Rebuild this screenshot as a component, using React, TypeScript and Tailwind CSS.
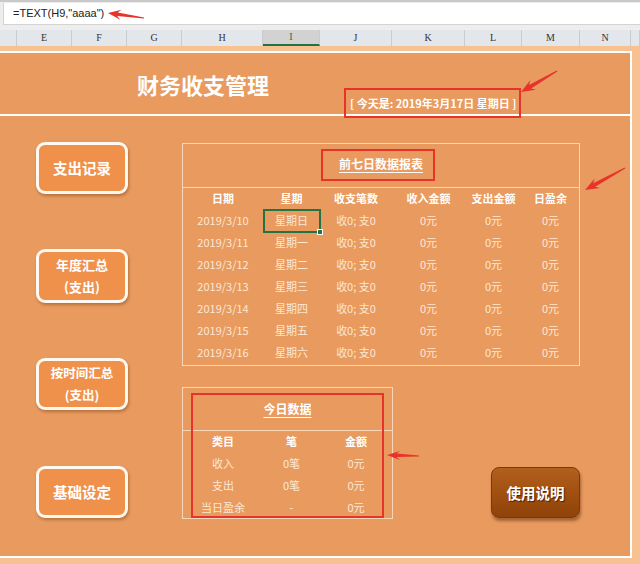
import React from "react";

type P = [number, number];

function arrowPts(tip: P, tail: P, head = 13, hw = 5.5, sw = 2, tw = 0.7): string {
  const dx = tail[0] - tip[0];
  const dy = tail[1] - tip[1];
  const L = Math.hypot(dx, dy);
  const ux = dx / L;
  const uy = dy / L;
  const nx = -uy;
  const ny = ux;
  const bx = tip[0] + ux * head;
  const by = tip[1] + uy * head;
  const cx = tip[0] + ux * (head - 3.5);
  const cy = tip[1] + uy * (head - 3.5);
  const pts: P[] = [
    tip,
    [bx + nx * hw, by + ny * hw],
    [cx + nx * sw, cy + ny * sw],
    [tail[0] + nx * tw, tail[1] + ny * tw],
    [tail[0] - nx * tw, tail[1] - ny * tw],
    [cx - nx * sw, cy - ny * sw],
    [bx - nx * hw, by - ny * hw],
  ];
  return pts.map((p) => `${p[0].toFixed(1)},${p[1].toFixed(1)}`).join(" ");
}

const headerCols = [
  { l: "", c: "w-[17px]" },
  { l: "E", c: "w-[55px]" },
  { l: "F", c: "w-[55px]" },
  { l: "G", c: "w-[55px]" },
  { l: "H", c: "w-[81px]" },
  { l: "I", c: "w-[57px] bg-[#D2D2D2] border-b-2 border-b-[#217346] text-[#217346]" },
  { l: "J", c: "w-[72px]" },
  { l: "K", c: "w-[73px]" },
  { l: "L", c: "w-[57px]" },
  { l: "M", c: "w-[58px]" },
  { l: "N", c: "w-[51px]" },
  { l: "", c: "w-[9px]" },
];

const weekRows = [
  ["2019/3/10", "星期日"],
  ["2019/3/11", "星期一"],
  ["2019/3/12", "星期二"],
  ["2019/3/13", "星期三"],
  ["2019/3/14", "星期四"],
  ["2019/3/15", "星期五"],
  ["2019/3/16", "星期六"],
];

const todayRows = [
  ["收入", "0笔", "0元"],
  ["支出", "0笔", "0元"],
  ["当日盈余", "-", "0元"],
];

function SideButton({ children, className }: { children: React.ReactNode; className: string }) {
  return (
    <div
      className={
        "w-[92px] h-[52px] rounded-[9px] border-[3px] border-[#FFF9F2] bg-[#F0914B] shadow-[1px_2px_3px_rgba(90,40,0,0.35)] flex flex-col items-center justify-center text-white font-bold " +
        className
      }
    >
      {children}
    </div>
  );
}

export default function App() {
  return (
    <div className="relative w-[640px] h-[564px] overflow-hidden bg-[#F7C192] font-['Noto_Sans_CJK_SC',sans-serif]">
      {/* formula bar */}
      <div className="h-[30px] bg-[#EDEDED] border-t-2 border-[#C9C9C9] pt-[1px]">
        <div className="ml-[3px] h-[22px] bg-white border-l border-b border-[#D4D4D4] flex items-center pl-[9px] font-['Liberation_Sans',sans-serif] text-[11px] text-[#222]">
          =TEXT(H9,"aaaa")
        </div>
      </div>

      {/* column header row */}
      <div className="h-[16px] flex bg-[#E3E6EA]">
        {headerCols.map((c, i) => (
          <div
            key={i}
            className={
              "h-full shrink-0 border-r border-[#C8CBCF] flex items-center justify-center font-['Liberation_Serif',serif] text-[10px] leading-none text-[#333] " +
              c.c
            }
          >
            {c.l}
          </div>
        ))}
      </div>

      <div className="h-[5px]" />

      {/* main panel */}
      <div className="w-[632px] h-[507px] bg-[#E89A5F] border-t-2 border-r-2 border-b-2 border-white flex flex-col">
        {/* title row */}
        <div className="h-[63px] shrink-0 border-b-2 border-white flex">
          <div className="w-[350px] pl-[137px] flex items-center">
            <span className="text-[22px] font-bold text-white leading-none">财务收支管理</span>
          </div>
          <div className="self-end pb-[1px]">
            <span className="relative inline-block text-[11px] font-bold text-white leading-[16px] whitespace-nowrap">
              [ 今天是: 2019年3月17日 星期日 ]
              <span className="absolute left-[-6px] right-[-5px] top-[-7px] bottom-[-7px] border-2 border-[#E8332B]" />
            </span>
          </div>
        </div>

        {/* body */}
        <div className="flex-1 flex">
          {/* left buttons */}
          <div className="w-[182px] shrink-0 pl-[36px] flex flex-col">
            <SideButton className="mt-[26px] text-[14.5px]">支出记录</SideButton>
            <SideButton className="mt-[55px] text-[13px] leading-[22px] h-[54px]">
              <span>年度汇总</span>
              <span>(支出)</span>
            </SideButton>
            <SideButton className="mt-[55px] text-[12.5px] leading-[22px]">
              <span>按时间汇总</span>
              <span>(支出)</span>
            </SideButton>
            <SideButton className="mt-[56px] text-[14.5px]">基础设定</SideButton>
          </div>

          {/* right area */}
          <div className="flex flex-col pt-[27px]">
            {/* table 1 */}
            <div className="w-[398px] border border-[#F8D7B8] pb-[2px]">
              <div className="h-[44px] border-b border-[#F8D7B8] flex items-center justify-center pb-[3px]">
                <span className="relative text-[12px] font-bold text-white underline underline-offset-[3px] leading-[16px]">
                  前七日数据报表
                  <span className="absolute left-[-18px] right-[-12px] top-[-7px] bottom-[-9px] border-2 border-[#E8332B]" />
                </span>
              </div>
              <div className="grid grid-cols-[80px_57px_72px_73px_57px_57px] text-[11px] text-center">
                {["日期", "星期", "收支笔数", "收入金额", "支出金额", "日盈余"].map((h) => (
                  <div key={h} className="h-[21px] flex items-center justify-center font-bold text-white">
                    {h}
                  </div>
                ))}
                {weekRows.map((r, i) => (
                  <React.Fragment key={r[0]}>
                    <div className="h-[22px] flex items-center justify-center text-[#FDE8D4]">{r[0]}</div>
                    <div className="relative h-[22px] flex items-center justify-center text-[#FDE8D4]">
                      {r[1]}
                      {i === 0 && (
                        <>
                          <span className="absolute left-0 right-[-1px] top-0 bottom-[-2px] border-2 border-[#227447]" />
                          <span className="absolute right-[-3px] bottom-[-4px] w-[6px] h-[6px] bg-[#227447] border border-white" />
                        </>
                      )}
                    </div>
                    <div className="h-[22px] flex items-center justify-center text-[#FDE8D4]">收0; 支0</div>
                    <div className="h-[22px] flex items-center justify-center text-[#FDE8D4]">0元</div>
                    <div className="h-[22px] flex items-center justify-center text-[#FDE8D4]">0元</div>
                    <div className="h-[22px] flex items-center justify-center text-[#FDE8D4]">0元</div>
                  </React.Fragment>
                ))}
              </div>
            </div>

            {/* bottom row */}
            <div className="mt-[21px] flex items-end">
              <div className="relative w-[211px] border border-[#F8D7B8]">
                <div className="h-[43px] border-b border-[#F8D7B8] flex items-center justify-center">
                  <span className="text-[12px] font-bold text-white underline underline-offset-[3px] leading-[16px]">今日数据</span>
                </div>
                <div className="grid grid-cols-[80px_57px_72px] text-[11px] text-center">
                  {["类目", "笔", "金额"].map((h) => (
                    <div key={h} className="h-[21px] flex items-center justify-center font-bold text-white">
                      {h}
                    </div>
                  ))}
                  {todayRows.map((r) => (
                    <React.Fragment key={r[0]}>
                      {r.map((c, j) => (
                        <div key={j} className="h-[22px] flex items-center justify-center text-[#FDE8D4]">
                          {c}
                        </div>
                      ))}
                    </React.Fragment>
                  ))}
                </div>
                <span className="absolute left-[8px] right-[8px] top-[5px] bottom-[0px] border-2 border-[#E8332B]" />
              </div>
              <div className="ml-[98px] mb-[1px] w-[89px] h-[51px] rounded-[8px] border border-[#7A3909] bg-gradient-to-b from-[#B2601E] via-[#A2500F] to-[#8E430A] shadow-[1px_3px_3px_rgba(80,30,0,0.45)] flex items-center justify-center">
                <span className="text-[14.5px] font-bold text-white [text-shadow:1px_1px_1px_rgba(60,20,0,0.8)]">使用说明</span>
              </div>
            </div>
          </div>
        </div>
      </div>

      {/* annotation arrows */}
      <svg className="absolute left-0 top-0 w-[640px] h-[564px] pointer-events-none" viewBox="0 0 640 564">
        <polygon points={arrowPts([108, 13], [144, 18], 13, 5, 1.8, 0.6)} fill="#E8332B" />
        <polygon points={arrowPts([521, 92], [557, 71], 14, 5.5, 2, 0.6)} fill="#E8332B" />
        <polygon points={arrowPts([585, 190], [625, 168], 14, 5.5, 2, 0.6)} fill="#E8332B" />
        <polygon points={arrowPts([387, 455], [419, 456], 13, 4.5, 1.8, 0.6)} fill="#E8332B" />
      </svg>
    </div>
  );
}
